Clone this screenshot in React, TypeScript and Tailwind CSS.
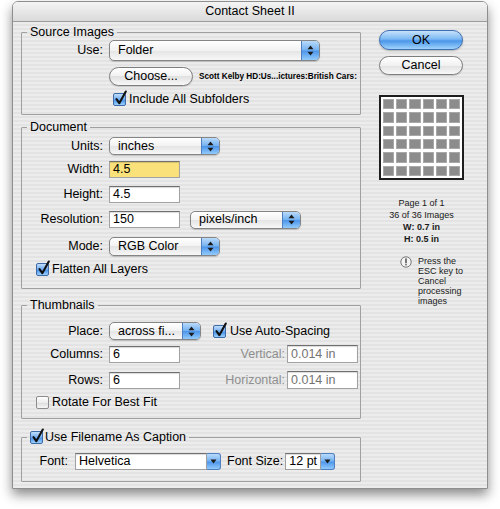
import React from "react";

function UpDown() {
  return (
    <svg width="7" height="11" viewBox="0 0 7 11">
      <path d="M3.5 0.5 L6.5 4.2 L0.5 4.2 Z" fill="#1b1b1b" />
      <path d="M3.5 10.5 L6.5 6.8 L0.5 6.8 Z" fill="#1b1b1b" />
    </svg>
  );
}

function DownArrow() {
  return (
    <svg width="7" height="5" viewBox="0 0 7 5">
      <path d="M0.5 0.5 L6.5 0.5 L3.5 4.5 Z" fill="#1b1b1b" />
    </svg>
  );
}

function Popup({ className, text }: { className: string; text: string }) {
  return (
    <div
      className={`flex items-stretch overflow-hidden rounded-[5px] border border-[#858585] bg-[linear-gradient(#ffffff,#f2f2f2_50%,#e4e4e4_50%,#f7f7f7)] shadow-[0_1px_1px_rgba(0,0,0,0.18)] ${className}`}
    >
      <div className="flex flex-1 items-center pl-[8px] text-black whitespace-nowrap">{text}</div>
      <div className="flex w-[18px] items-center justify-center border-l border-[#4f7fc0] bg-[linear-gradient(#b9dafb,#75b2f1_48%,#4c95ea_52%,#92cafb)]">
        <UpDown />
      </div>
    </div>
  );
}

function Combo({ className, text }: { className: string; text: string }) {
  return (
    <div className={`flex items-stretch ${className}`}>
      <div className="flex flex-1 items-center border border-[#a0a0a0] border-t-[#707070] bg-white pl-[3px] text-black shadow-[inset_0_1px_1px_rgba(0,0,0,0.15)] whitespace-nowrap">
        {text}
      </div>
      <div className="flex w-[14px] items-center justify-center rounded-r-[3px] border border-l-0 border-[#4f7fc0] bg-[linear-gradient(#b9dafb,#75b2f1_48%,#4c95ea_52%,#92cafb)]">
        <DownArrow />
      </div>
    </div>
  );
}

function Field({
  className,
  value,
  yellow,
  disabled,
}: {
  className: string;
  value: string;
  yellow?: boolean;
  disabled?: boolean;
}) {
  return (
    <div
      className={`flex items-center border border-[#a2a2a2] border-t-[#6f6f6f] pl-[3px] shadow-[inset_0_1px_1px_rgba(0,0,0,0.15)] ${
        yellow ? "bg-[#fbe17a]" : "bg-white"
      } ${disabled ? "text-[#737373]" : "text-black"} ${className}`}
    >
      {value}
    </div>
  );
}

function Check({ checked }: { checked: boolean }) {
  return (
    <span
      className={`relative inline-block h-[13px] w-[13px] shrink-0 rounded-[2px] border ${
        checked
          ? "border-[#3e6aa8] bg-[linear-gradient(#c0defb,#6eaaf0_50%,#4a92e8_55%,#9ad0fc)]"
          : "border-[#8c8c8c] bg-[linear-gradient(#ffffff,#ececec_50%,#dedede_55%,#f6f6f6)]"
      }`}
    >
      {checked && (
        <svg
          className="absolute left-[0px] top-[-4px]"
          width="14"
          height="16"
          viewBox="0 0 14 16"
        >
          <path
            d="M2.5 9.2 L5.3 13.2 L11.8 1.5"
            fill="none"
            stroke="#111"
            strokeWidth="2.1"
            strokeLinecap="round"
            strokeLinejoin="round"
          />
        </svg>
      )}
    </span>
  );
}

function InfoIcon() {
  return (
    <svg width="12" height="12" viewBox="0 0 12 12">
      <circle cx="6" cy="6" r="5.2" fill="#f4f4f4" stroke="#6a6a6a" strokeWidth="0.9" />
      <path d="M6 2.8 L6 6.8" stroke="#333" strokeWidth="1.3" strokeLinecap="round" />
      <circle cx="6" cy="8.8" r="0.75" fill="#333" />
    </svg>
  );
}

function Label({ children, className }: { children: React.ReactNode; className: string }) {
  return <span className={`text-right text-black whitespace-nowrap ${className}`}>{children}</span>;
}

export default function App() {
  const cells = Array.from({ length: 36 });
  return (
    <div className="h-[509px] w-[500px] overflow-hidden bg-white font-['Liberation_Sans',Arial,sans-serif] text-[12.5px] leading-[15px] text-black">
      <div className="ml-[12px] mt-[1px] flex h-[488px] w-[476px] flex-col overflow-hidden rounded-t-[6px] border border-[#8e8e8e] shadow-[0_6px_12px_rgba(0,0,0,0.45)]">
        {/* Title bar */}
        <div className="flex h-[20px] shrink-0 items-center justify-center border-b border-[#9c9c9c] bg-[linear-gradient(#f4f4f4,#dadada)]">
          Contact Sheet II
        </div>

        {/* Body */}
        <div className="flex flex-1 bg-[image:repeating-linear-gradient(180deg,#ececec_0px,#ececec_2px,#e3e3e3_2px,#e3e3e3_4px)]">
          {/* Left column */}
          <div className="w-[348px] pl-[8px] pt-[3px]">
            {/* Source Images */}
            <fieldset className="w-[340px] rounded-[1px] border border-[#a0a0a0] pb-[7px]">
              <legend className="ml-[5px] px-[3px] leading-[15px]">Source Images</legend>
              <div className="flex items-center">
                <Label className="w-[81px]">Use:</Label>
                <Popup className="ml-[6px] h-[21px] w-[211px]" text="Folder" />
              </div>
              <div className="ml-[87px] mt-[6px] flex items-center">
                <div className="flex h-[19px] w-[84px] items-center justify-center rounded-full border border-[#7d7d7d] bg-[linear-gradient(#ffffff,#f1f1f1_50%,#e1e1e1_50%,#f8f8f8)] shadow-[0_1px_1px_rgba(0,0,0,0.15)]">
                  Choose...
                </div>
                <span className="ml-[6px] whitespace-nowrap text-[8.2px] font-bold leading-[10px]">
                  Scott Kelby HD:Us...ictures:British Cars:
                </span>
              </div>
              <div className="ml-[91px] mt-[6px] flex h-[15px] items-center">
                <Check checked />
                <span className="ml-[3px]">Include All Subfolders</span>
              </div>
            </fieldset>

            {/* Document */}
            <fieldset className="mt-[5px] w-[340px] rounded-[1px] border border-[#a0a0a0] pb-[11px]">
              <legend className="ml-[5px] px-[3px] leading-[15px]">Document</legend>
              <div className="mt-[2px] flex items-center">
                <Label className="w-[81px]">Units:</Label>
                <Popup className="ml-[6px] h-[18px] w-[111px]" text="inches" />
              </div>
              <div className="mt-[6px] flex items-center">
                <Label className="w-[81px]">Width:</Label>
                <Field className="ml-[6px] h-[17px] w-[71px]" value="4.5" yellow />
              </div>
              <div className="mt-[8px] flex items-center">
                <Label className="w-[81px]">Height:</Label>
                <Field className="ml-[6px] h-[17px] w-[71px]" value="4.5" />
              </div>
              <div className="mt-[8px] flex h-[17px] items-center">
                <Label className="w-[81px]">Resolution:</Label>
                <Field className="ml-[6px] h-[17px] w-[71px]" value="150" />
                <Popup className="ml-[10px] h-[18px] w-[111px]" text="pixels/inch" />
              </div>
              <div className="mt-[9px] flex items-center">
                <Label className="w-[81px]">Mode:</Label>
                <Popup className="ml-[6px] h-[19px] w-[111px]" text="RGB Color" />
              </div>
              <div className="ml-[14px] mt-[6px] flex h-[15px] items-center">
                <Check checked />
                <span className="ml-[3px]">Flatten All Layers</span>
              </div>
            </fieldset>

            {/* Thumbnails */}
            <fieldset className="mt-[9px] w-[340px] rounded-[1px] border border-[#a0a0a0] pb-[8px]">
              <legend className="ml-[5px] px-[3px] leading-[15px]">Thumbnails</legend>
              <div className="mt-[9px] flex items-center">
                <Label className="w-[81px]">Place:</Label>
                <Popup className="ml-[6px] h-[18px] w-[92px]" text="across fi..." />
                <div className="ml-[12px] flex h-[15px] items-center">
                  <Check checked />
                  <span className="ml-[4px]">Use Auto-Spacing</span>
                </div>
              </div>
              <div className="mt-[5px] flex items-center">
                <Label className="w-[81px]">Columns:</Label>
                <Field className="ml-[6px] h-[17px] w-[71px]" value="6" />
                <span className="w-[105px] text-right whitespace-nowrap text-[#8f8f8f]">Vertical:</span>
                <Field className="ml-[2px] h-[18px] w-[71px]" value="0.014 in" disabled />
              </div>
              <div className="mt-[8px] flex items-center">
                <Label className="w-[81px]">Rows:</Label>
                <Field className="ml-[6px] h-[17px] w-[71px]" value="6" />
                <span className="w-[105px] text-right whitespace-nowrap text-[#8f8f8f]">Horizontal:</span>
                <Field className="ml-[2px] h-[18px] w-[71px]" value="0.014 in" disabled />
              </div>
              <div className="ml-[14px] mt-[6px] flex h-[15px] items-center">
                <Check checked={false} />
                <span className="ml-[3px]">Rotate For Best Fit</span>
              </div>
            </fieldset>

            {/* Caption */}
            <fieldset className="mt-[11px] w-[340px] rounded-[1px] border border-[#a0a0a0] pb-[11px]">
              <legend className="ml-[5px] px-[3px] leading-[15px]">
                <span className="flex h-[15px] items-center">
                  <Check checked />
                  <span className="ml-[2px]">Use Filename As Caption</span>
                </span>
              </legend>
              <div className="mt-[8px] flex items-center">
                <Label className="w-[46px]">Font:</Label>
                <Combo className="ml-[7px] h-[17px] w-[146px]" text="Helvetica" />
                <span className="ml-[6px] whitespace-nowrap">Font Size:</span>
                <Combo className="ml-[2px] h-[17px] w-[50px]" text="12 pt" />
              </div>
            </fieldset>
          </div>

          {/* Right column */}
          <div className="ml-[18px] flex w-[85px] flex-col pt-[8px]">
            <div className="flex h-[20px] w-[84px] items-center justify-center rounded-full border border-[#3f6fb3] bg-[linear-gradient(#c6e2fc,#7cb8f3_45%,#4b96ea_55%,#9fd4fd)] shadow-[0_1px_2px_rgba(0,0,0,0.25)]">
              OK
            </div>
            <div className="mt-[6px] flex h-[19px] w-[84px] items-center justify-center rounded-full border border-[#7d7d7d] bg-[linear-gradient(#ffffff,#f1f1f1_50%,#e1e1e1_50%,#f8f8f8)] shadow-[0_1px_1px_rgba(0,0,0,0.15)]">
              Cancel
            </div>
            <div className="mt-[20px] grid h-[85px] w-[85px] grid-cols-6 grid-rows-6 gap-x-[2px] gap-y-[3px] border-2 border-[#1e1e1e] bg-white p-[2px]">
              {cells.map((_, i) => (
                <div key={i} className="border border-[#a9a9a9] bg-[#8c8c8c]" />
              ))}
            </div>
            <div className="mt-[17px] flex flex-col items-center text-[9px] leading-[12px] text-[#1a1a1a]">
              <span>Page 1 of 1</span>
              <span>36 of 36 Images</span>
              <span className="font-bold">W: 0.7 in</span>
              <span className="font-bold">H: 0.5 in</span>
            </div>
            <div className="ml-[21px] mt-[11px] flex text-[9px] leading-[10px] text-[#1a1a1a]">
              <div className="pt-[0px]">
                <InfoIcon />
              </div>
              <div className="ml-[6px] flex flex-col">
                <span>Press the</span>
                <span>ESC key to</span>
                <span>Cancel</span>
                <span>processing</span>
                <span>images</span>
              </div>
            </div>
          </div>
        </div>
      </div>
    </div>
  );
}
